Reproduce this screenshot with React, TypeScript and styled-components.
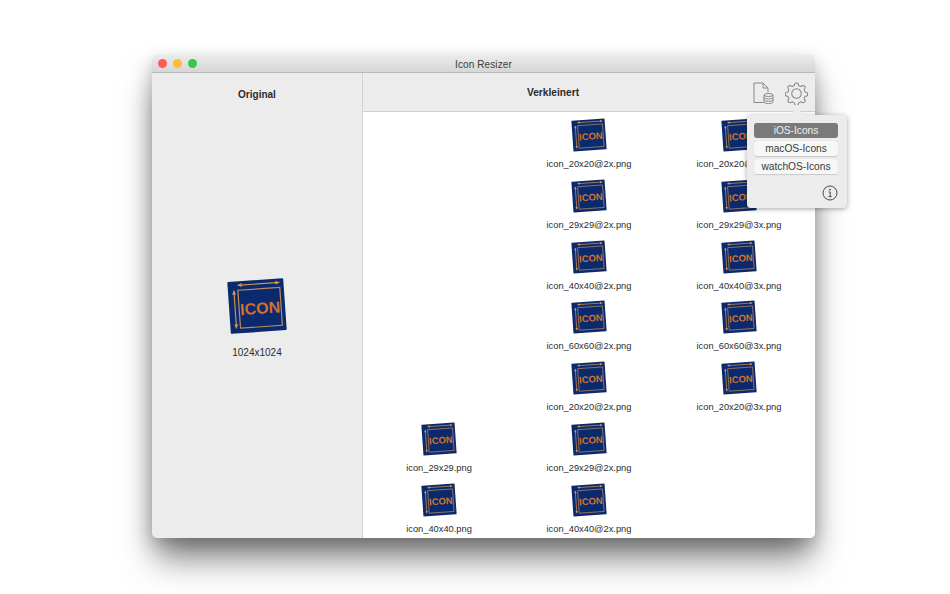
import styled, { createGlobalStyle } from "styled-components";

const GlobalStyle = createGlobalStyle`
  html, body {
    margin: 0;
    width: 950px;
    height: 594px;
    overflow: hidden;
    background: #ffffff;
    font-family: "Liberation Sans", Arial, sans-serif;
  }
`;

type Cell = { name: string; col: number };

// leere Spalten bleiben leer, deshalb steht die Spalte mit im Eintrag
const FILES: Cell[] = [
  { name: "icon_20x20@2x.png", col: 2 },
  { name: "icon_20x20@3x.png", col: 3 },
  { name: "icon_29x29@2x.png", col: 2 },
  { name: "icon_29x29@3x.png", col: 3 },
  { name: "icon_40x40@2x.png", col: 2 },
  { name: "icon_40x40@3x.png", col: 3 },
  { name: "icon_60x60@2x.png", col: 2 },
  { name: "icon_60x60@3x.png", col: 3 },
  { name: "icon_20x20@2x.png", col: 2 },
  { name: "icon_20x20@3x.png", col: 3 },
  { name: "icon_29x29.png", col: 1 },
  { name: "icon_29x29@2x.png", col: 2 },
  { name: "icon_40x40.png", col: 1 },
  { name: "icon_40x40@2x.png", col: 2 },
];

function AppIcon({ size }: { size: number }) {
  return (
    <svg width={size} height={size} viewBox="0 0 64 64">
      <g transform="rotate(-4 32 32)">
        <rect x="4" y="6" width="56" height="52" rx="1" fill="#0b2a6e" />
        <rect x="14" y="15" width="42" height="38" fill="none" stroke="#b98a63" strokeWidth="1.2" />
        <path d="M14 10h42M10 15v38" stroke="#d09048" strokeWidth="1.2" fill="none" />
        <path d="M14 10l4-2v4zM56 10l-4-2v4zM10 15l-2 4h4zM10 53l-2-4h4z" fill="#d99a50" />
        <text
          x="35"
          y="40"
          textAnchor="middle"
          fontFamily="'Liberation Sans', Arial, sans-serif"
          fontWeight="700"
          fontSize="16"
          fill="#d2702c"
        >
          ICON
        </text>
      </g>
    </svg>
  );
}

function FileDbIcon() {
  return (
    <svg width="21" height="23" viewBox="0 0 21 23" fill="none" stroke="#8a8a8a" strokeWidth="1">
      <path d="M10.5 20.5H1V1h9l5 5v4.5" />
      <path d="M10 1v5h5" />
      <ellipse cx="15.5" cy="13" rx="4.5" ry="1.5" />
      <path d="M11 13v7c0 1 2 1.6 4.5 1.6s4.5-.6 4.5-1.6v-7" />
      <path d="M11 15.4c0 1 2 1.6 4.5 1.6s4.5-.6 4.5-1.6M11 17.8c0 1 2 1.6 4.5 1.6s4.5-.6 4.5-1.6" />
    </svg>
  );
}

function GearIcon() {
  return (
    <svg width="23" height="23" viewBox="0 0 24 24" fill="none" stroke="#858585" strokeWidth="1.05">
      <path
        d="M10.4 1.6c.5-.8 2.7-.8 3.2 0l.9 2.3 2 .8 2.3-1c.9-.2 2.4 1.3 2.2 2.2l-1 2.3.8 2 2.3.9c.8.5.8 2.7 0 3.2l-2.3.9-.8 2 1 2.3c.2.9-1.3 2.4-2.2 2.2l-2.3-1-2 .8-.9 2.3c-.5.8-2.7.8-3.2 0l-.9-2.3-2-.8-2.3 1c-.9.2-2.4-1.3-2.2-2.2l1-2.3-.8-2-2.3-.9c-.8-.5-.8-2.7 0-3.2l2.3-.9.8-2-1-2.3c-.2-.9 1.3-2.4 2.2-2.2l2.3 1 2-.8z"
        strokeLinejoin="round"
      />
      <circle cx="12" cy="12" r="5" />
    </svg>
  );
}

function InfoIcon() {
  return (
    <svg width="16" height="16" viewBox="0 0 16 16" fill="none" stroke="#4a4a4a">
      <circle cx="8" cy="8" r="7" strokeWidth="1" />
      <path d="M6.6 7h1.6v4.6M6.4 11.6h3.2" strokeWidth="1" />
      <circle cx="7.9" cy="4.6" r="0.9" fill="#4a4a4a" stroke="none" />
    </svg>
  );
}

export default function App() {
  return (
    <>
      <GlobalStyle />
      <Page>
        <Window>
          <TitleBar>
            <Lights>
              <Light $color="#fc5b57" />
              <Light $color="#fdbc40" />
              <Light $color="#35c84a" />
            </Lights>
            Icon Resizer
          </TitleBar>
          <Body>
            <LeftPane>
              <LeftHeader>Original</LeftHeader>
              <Preview>
                <AppIcon size={64} />
                <PreviewLabel>1024x1024</PreviewLabel>
              </Preview>
            </LeftPane>
            <RightPane>
              <RightHeader>
                Verkleinert
                <Tools>
                  <FileDbIcon />
                  <GearIcon />
                </Tools>
              </RightHeader>
              <FileGrid>
                {FILES.map((file, i) => (
                  <FileCell key={i} $col={file.col}>
                    <AppIcon size={38} />
                    <FileName>{file.name}</FileName>
                  </FileCell>
                ))}
              </FileGrid>
            </RightPane>
          </Body>
          <Popover>
            <PopoverArrow />
            <ModeButton $active>iOS-Icons</ModeButton>
            <ModeButton>macOS-Icons</ModeButton>
            <ModeButton>watchOS-Icons</ModeButton>
            <InfoRow>
              <InfoIcon />
            </InfoRow>
          </Popover>
        </Window>
      </Page>
    </>
  );
}

const Page = styled.div`
  width: 950px;
  height: 594px;
  padding: 55px 0 0 152px;
  box-sizing: border-box;
`;

const Window = styled.div`
  position: relative;
  width: 663px;
  height: 483px;
  display: flex;
  flex-direction: column;
  border-radius: 5px;
  background: #ececec;
  box-shadow: 0 24px 34px -4px rgba(0, 0, 0, 0.5), 0 6px 18px rgba(0, 0, 0, 0.22);
`;

const TitleBar = styled.div`
  position: relative;
  height: 16px;
  padding-top: 1px;
  flex: none;
  display: flex;
  align-items: center;
  justify-content: center;
  border-radius: 5px 5px 0 0;
  border-bottom: 1px solid #b9b9b9;
  background: linear-gradient(#ebebeb, #d6d6d6);
  font-size: 10px;
  color: #3c3c3c;
  letter-spacing: 0.1px;
`;

const Lights = styled.div`
  position: absolute;
  left: 6px;
  top: 4px;
  display: flex;
  gap: 6px;
`;

const Light = styled.span<{ $color: string }>`
  width: 9px;
  height: 9px;
  border-radius: 50%;
  background: ${(p) => p.$color};
`;

const Body = styled.div`
  flex: 1;
  min-height: 0;
  display: flex;
`;

const LeftPane = styled.div`
  width: 210px;
  flex: none;
  display: flex;
  flex-direction: column;
  border-right: 1px solid #d2d2d2;
`;

const LeftHeader = styled.div`
  height: 42px;
  flex: none;
  display: flex;
  align-items: center;
  justify-content: center;
  font-size: 10px;
  font-weight: 700;
  color: #2b2b2b;
`;

const Preview = styled.div`
  display: flex;
  flex-direction: column;
  align-items: center;
  margin-top: 159px;
`;

const PreviewLabel = styled.div`
  margin-top: 9px;
  font-size: 10px;
  color: #2b2b2b;
`;

const RightPane = styled.div`
  flex: 1;
  min-width: 0;
  display: flex;
  flex-direction: column;
`;

const RightHeader = styled.div`
  position: relative;
  height: 38px;
  flex: none;
  display: flex;
  align-items: center;
  justify-content: center;
  padding-right: 72px;
  border-bottom: 1px solid #d2d2d2;
  font-size: 10.2px;
  font-weight: 700;
  color: #2b2b2b;
`;

const Tools = styled.div`
  position: absolute;
  right: 7px;
  top: 9px;
  display: flex;
  align-items: center;
  gap: 11px;
`;

const FileGrid = styled.div`
  flex: 1;
  min-height: 0;
  overflow: hidden;
  background: #ffffff;
  padding-left: 1px;
  display: grid;
  grid-template-columns: repeat(3, 150px);
  grid-auto-rows: 60.8px;
  border-radius: 0 0 5px 0;
`;

const FileCell = styled.div<{ $col: number }>`
  grid-column: ${(p) => p.$col};
  display: flex;
  flex-direction: column;
  align-items: center;
  padding-top: 4px;
`;

const FileName = styled.div`
  margin-top: 3px;
  font-size: 9.3px;
  line-height: 14px;
  color: #2b2b2b;
`;

const Popover = styled.div`
  position: absolute;
  left: 595px;
  top: 60px;
  width: 100px;
  height: 93px;
  box-sizing: border-box;
  padding: 8px 9px 0 7px;
  display: flex;
  flex-direction: column;
  align-items: stretch;
  gap: 3px;
  background: #ececec;
  border-radius: 4px;
  box-shadow: 0 1px 5px rgba(0, 0, 0, 0.35);
`;

const PopoverArrow = styled.div`
  position: absolute;
  left: 45px;
  top: -5px;
  width: 10px;
  height: 10px;
  background: #ececec;
  transform: rotate(45deg);
`;

const ModeButton = styled.div<{ $active?: boolean }>`
  position: relative;
  height: 15px;
  display: flex;
  align-items: center;
  justify-content: center;
  border-radius: 3px;
  font-size: 10.2px;
  color: ${(p) => (p.$active ? "#f0f0f0" : "#3a3a3a")};
  background: ${(p) => (p.$active ? "#7a7a7a" : "#f7f7f7")};
  box-shadow: ${(p) => (p.$active ? "none" : "0 0.5px 1px rgba(0, 0, 0, 0.15)")};
`;

const InfoRow = styled.div`
  margin-top: 8px;
  display: flex;
  justify-content: flex-end;
`;
